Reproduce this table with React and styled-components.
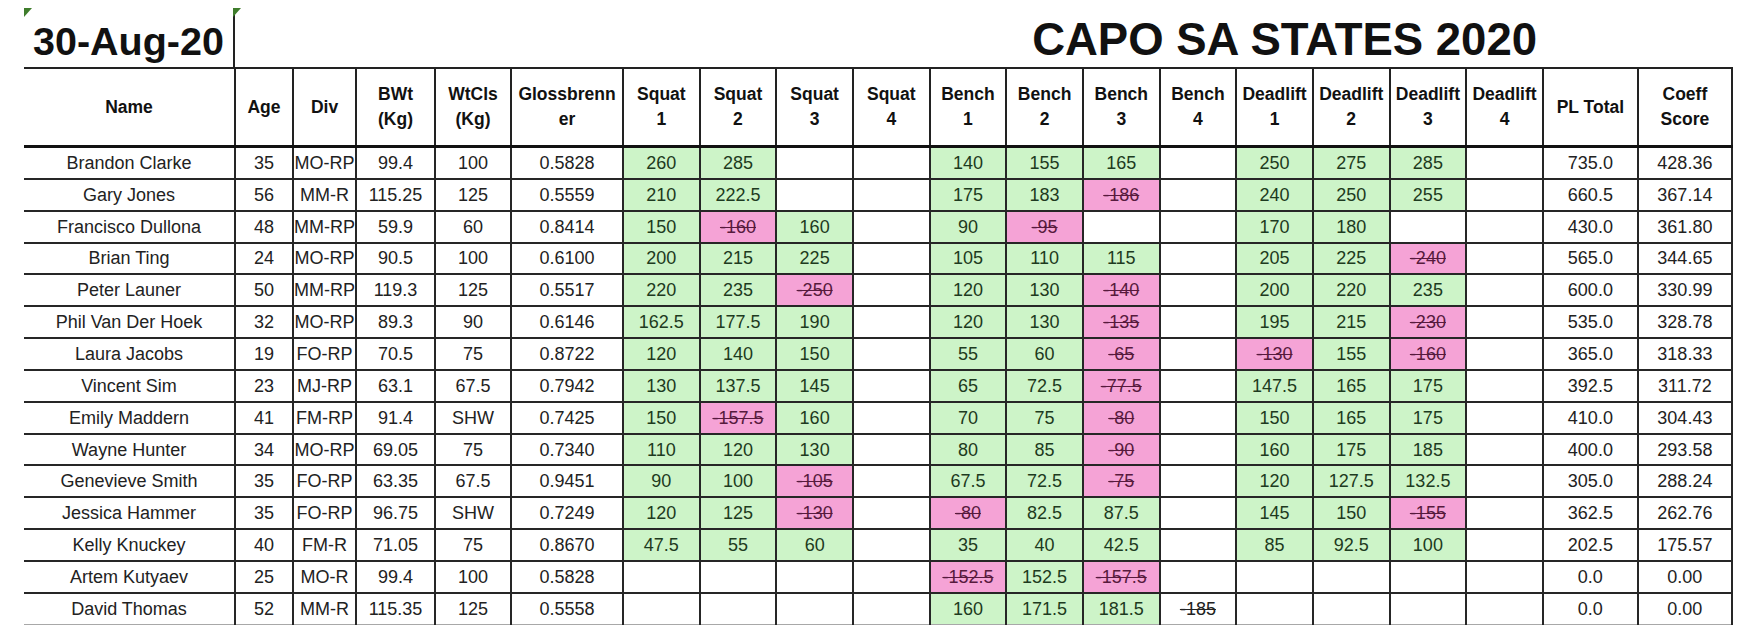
import React from "react";
import styled, { createGlobalStyle } from "styled-components";

const GlobalStyle = createGlobalStyle`
  html, body { margin: 0; padding: 0; background: #ffffff; }
  body { font-family: "Liberation Sans", Arial, Helvetica, sans-serif; color: #1c1c1c; }
`;

const Page = styled.div`
  padding: 8px 0 0 24px;
  width: 1708px;
`;

const TitleBar = styled.div`
  display: flex;
  height: 59px;
`;

const Marker = styled.span`
  position: absolute;
  top: 0;
  left: ${(p) => p.$left || 0}px;
  width: 0;
  height: 0;
  border-top: 9px solid #3f7d2c;
  border-right: 8px solid transparent;
`;

const DateCell = styled.div`
  position: relative;
  box-sizing: border-box;
  width: 211px;
  display: flex;
  align-items: flex-end;
  padding: 0 0 6px 9px;
  border-right: 2px solid #222;
  font-size: 39.5px;
  line-height: 1;
  font-weight: 700;
  color: #111;
`;

const TitleCell = styled.div`
  position: relative;
  box-sizing: border-box;
  width: 1308px;
  display: flex;
  justify-content: flex-end;
  align-items: flex-end;
  padding: 0 6px 5px 0;
  font-size: 45.5px;
  line-height: 1;
  font-weight: 700;
  color: #111;
`;

const Table = styled.table`
  border-collapse: collapse;
  table-layout: fixed;
  width: 1708px;
`;

const HeadCell = styled.th`
  height: 76px;
  padding: 0;
  border: 2px solid #222;
  border-bottom: 3px solid #111;
  border-left: ${(p) => (p.$first ? "none" : "2px solid #222")};
  font-size: 17.5px;
  line-height: 25px;
  font-weight: 700;
  color: #111;
  text-align: center;
  vertical-align: middle;
`;

const fills = {
  good: "#cdf4c8",
  fail: "#f5a3d6",
  plain: "transparent",
};
const inks = {
  good: "#1d3a20",
  fail: "#571a3d",
  plain: "#222",
};

const Cell = styled.td`
  height: 29.85px;
  padding: 0;
  border-left: ${(p) => (p.$first ? "none" : "2px solid #262626")};
  border-right: 2px solid #262626;
  border-top: 2px solid #262626;
  border-bottom: ${(p) => (p.$last ? "1px solid #a8a8a8" : "2px solid #262626")};
  background: ${(p) => fills[p.$kind || "plain"]};
  color: ${(p) => inks[p.$kind || "plain"]};
  font-size: 18px;
  line-height: 22px;
  text-align: center;
  vertical-align: middle;
  white-space: nowrap;
  overflow: hidden;
  text-decoration: ${(p) => (p.$strike ? "line-through" : "none")};
`;

const widths = [211, 58, 63, 79, 76, 112, ...Array(12).fill(76.67), 95, 94];

const headers = [
  ["Name"],
  ["Age"],
  ["Div"],
  ["BWt", "(Kg)"],
  ["WtCls", "(Kg)"],
  ["Glossbrenn", "er"],
  ["Squat", "1"], ["Squat", "2"], ["Squat", "3"], ["Squat", "4"],
  ["Bench", "1"], ["Bench", "2"], ["Bench", "3"], ["Bench", "4"],
  ["Deadlift", "1"], ["Deadlift", "2"], ["Deadlift", "3"], ["Deadlift", "4"],
  ["PL Total"],
  ["Coeff", "Score"],
];

const rows = [
  ["Brandon Clarke", "35", "MO-RP", "99.4", "100", "0.5828", ["260", "285", "", ""], ["140", "155", "165", ""], ["250", "275", "285", ""], "735.0", "428.36"],
  ["Gary Jones", "56", "MM-R", "115.25", "125", "0.5559", ["210", "222.5", "", ""], ["175", "183", "-186", ""], ["240", "250", "255", ""], "660.5", "367.14"],
  ["Francisco Dullona", "48", "MM-RP", "59.9", "60", "0.8414", ["150", "-160", "160", ""], ["90", "-95", "", ""], ["170", "180", "", ""], "430.0", "361.80"],
  ["Brian Ting", "24", "MO-RP", "90.5", "100", "0.6100", ["200", "215", "225", ""], ["105", "110", "115", ""], ["205", "225", "-240", ""], "565.0", "344.65"],
  ["Peter Launer", "50", "MM-RP", "119.3", "125", "0.5517", ["220", "235", "-250", ""], ["120", "130", "-140", ""], ["200", "220", "235", ""], "600.0", "330.99"],
  ["Phil Van Der Hoek", "32", "MO-RP", "89.3", "90", "0.6146", ["162.5", "177.5", "190", ""], ["120", "130", "-135", ""], ["195", "215", "-230", ""], "535.0", "328.78"],
  ["Laura Jacobs", "19", "FO-RP", "70.5", "75", "0.8722", ["120", "140", "150", ""], ["55", "60", "-65", ""], ["-130", "155", "-160", ""], "365.0", "318.33"],
  ["Vincent Sim", "23", "MJ-RP", "63.1", "67.5", "0.7942", ["130", "137.5", "145", ""], ["65", "72.5", "-77.5", ""], ["147.5", "165", "175", ""], "392.5", "311.72"],
  ["Emily Maddern", "41", "FM-RP", "91.4", "SHW", "0.7425", ["150", "-157.5", "160", ""], ["70", "75", "-80", ""], ["150", "165", "175", ""], "410.0", "304.43"],
  ["Wayne Hunter", "34", "MO-RP", "69.05", "75", "0.7340", ["110", "120", "130", ""], ["80", "85", "-90", ""], ["160", "175", "185", ""], "400.0", "293.58"],
  ["Genevieve Smith", "35", "FO-RP", "63.35", "67.5", "0.9451", ["90", "100", "-105", ""], ["67.5", "72.5", "-75", ""], ["120", "127.5", "132.5", ""], "305.0", "288.24"],
  ["Jessica Hammer", "35", "FO-RP", "96.75", "SHW", "0.7249", ["120", "125", "-130", ""], ["-80", "82.5", "87.5", ""], ["145", "150", "-155", ""], "362.5", "262.76"],
  ["Kelly Knuckey", "40", "FM-R", "71.05", "75", "0.8670", ["47.5", "55", "60", ""], ["35", "40", "42.5", ""], ["85", "92.5", "100", ""], "202.5", "175.57"],
  ["Artem Kutyaev", "25", "MO-R", "99.4", "100", "0.5828", ["", "", "", ""], ["-152.5", "152.5", "-157.5", ""], ["", "", "", ""], "0.0", "0.00"],
  ["David Thomas", "52", "MM-R", "115.35", "125", "0.5558", ["", "", "", ""], ["160", "171.5", "181.5", "!-185"], ["", "", "", ""], "0.0", "0.00"],
];

function attemptProps(v) {
  if (!v) return { kind: "plain", text: "", strike: false };
  if (v.startsWith("!")) return { kind: "plain", text: v.slice(1), strike: true };
  if (v.startsWith("-")) return { kind: "fail", text: v, strike: true };
  return { kind: "good", text: v, strike: false };
}

export default function App() {
  return (
    <>
      <GlobalStyle />
      <Page>
        <TitleBar>
          <DateCell>
            <Marker />
            30-Aug-20
          </DateCell>
          <TitleCell>
            <Marker $left={-2} />
            CAPO SA STATES 2020
          </TitleCell>
        </TitleBar>
        <Table>
          <colgroup>
            {widths.map((w, i) => (
              <col key={i} style={{ width: w }} />
            ))}
          </colgroup>
          <thead>
            <tr>
              {headers.map((h, i) => (
                <HeadCell key={i} $first={i === 0}>
                  {h.map((line, j) => (
                    <React.Fragment key={j}>
                      {j > 0 && <br />}
                      {line}
                    </React.Fragment>
                  ))}
                </HeadCell>
              ))}
            </tr>
          </thead>
          <tbody>
            {rows.map((r, ri) => {
              const last = ri === rows.length - 1;
              const attempts = [...r[6], ...r[7], ...r[8]];
              return (
                <tr key={ri}>
                  {r.slice(0, 6).map((v, i) => (
                    <Cell key={i} $first={i === 0} $last={last}>
                      {v}
                    </Cell>
                  ))}
                  {attempts.map((v, i) => {
                    const a = attemptProps(v);
                    return (
                      <Cell key={"a" + i} $kind={a.kind} $strike={a.strike} $last={last}>
                        {a.text}
                      </Cell>
                    );
                  })}
                  <Cell $last={last}>{r[9]}</Cell>
                  <Cell $last={last}>{r[10]}</Cell>
                </tr>
              );
            })}
          </tbody>
        </Table>
      </Page>
    </>
  );
}
